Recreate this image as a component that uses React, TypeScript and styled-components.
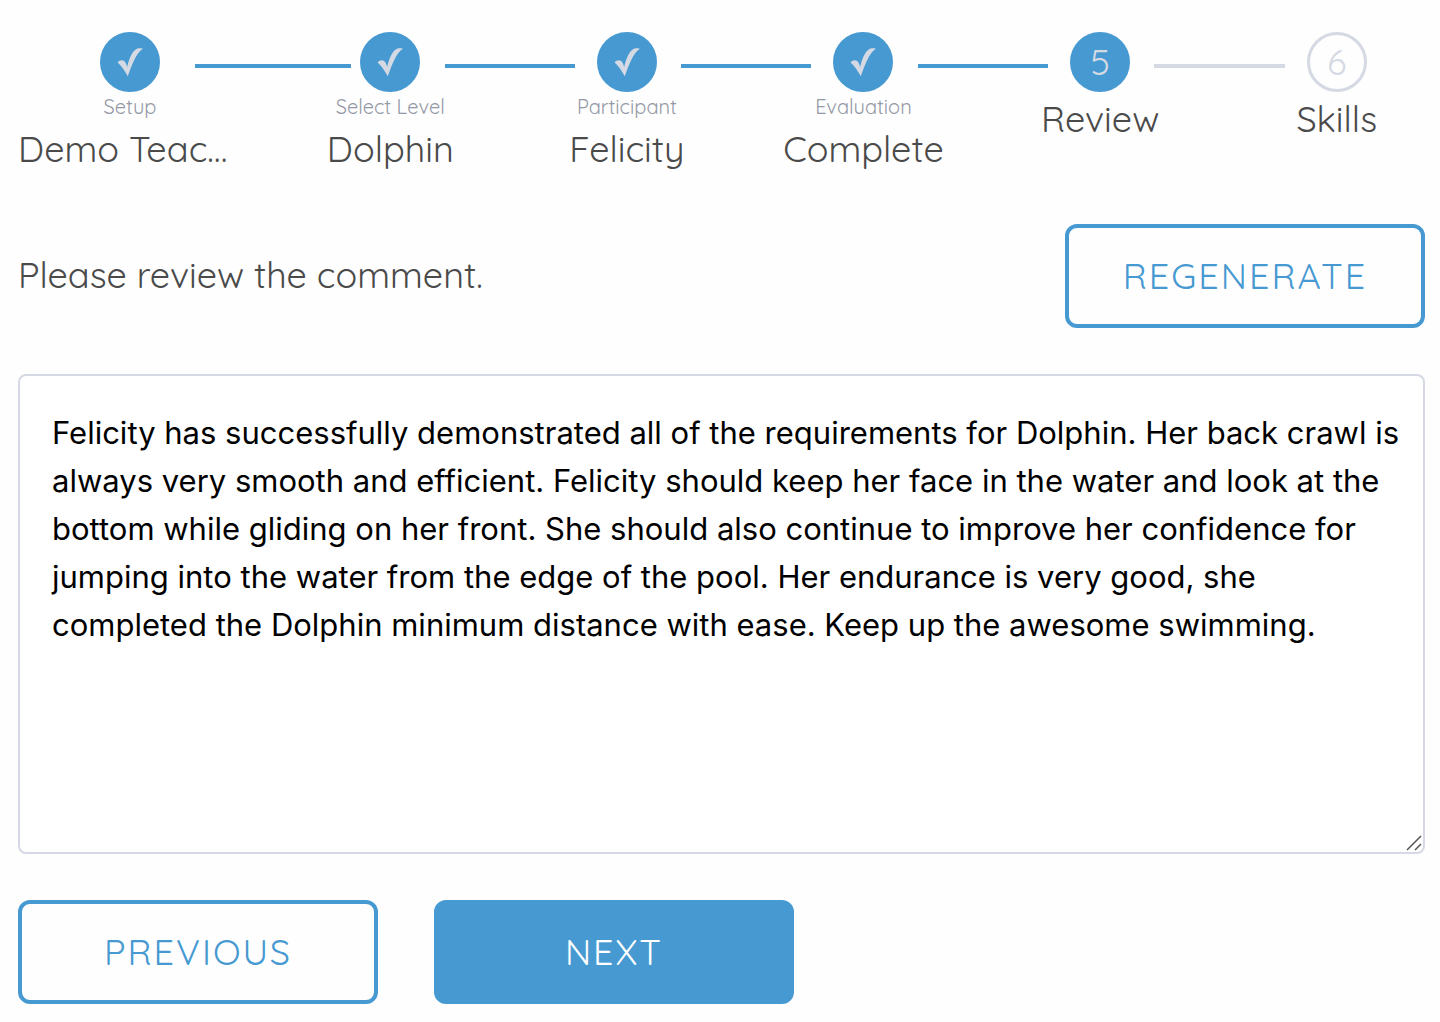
import React, { useState } from "react";
import styled, { createGlobalStyle } from "styled-components";

const blue = "#4699d1";
const mist = "#d5d9e3";
const slate = "#9499a6";
const ink = "#4a4a4a";

const GlobalStyle = createGlobalStyle`
  *, *::before, *::after { box-sizing: border-box; }
  body {
    margin: 0;
    background: #fefefe;
    color: ${ink};
    font-family: Quicksand, Lato, sans-serif;
    font-size: 36px;
  }
`;

const Page = styled.main`
  padding: 32px 15px 18px 18px;
`;

const Steps = styled.ol`
  display: grid;
  grid-template-columns: 224px repeat(5, minmax(0, 1fr));
  margin: 0 0 48px;
  padding: 0;
  list-style: none;
`;

const Step = styled.li<{ $first: boolean }>`
  display: grid;
  grid-template-columns: ${(p) => (p.$first ? "0" : "60px")} minmax(0, 1fr);
  grid-template-rows: 60px;
  align-content: start;
`;

const Connector = styled.span<{ $active: boolean; $long: boolean }>`
  grid-area: 1 / 1 / 2 / 3;
  align-self: center;
  width: ${(p) => (p.$long ? "66%" : "55%")};
  height: 4px;
  margin-top: 8px;
  margin-left: ${(p) => (p.$long ? "-47px" : "-34px")};
  background: ${(p) => (p.$active ? blue : mist)};
`;

const Marker = styled.span<{ $active: boolean }>`
  grid-area: 1 / 2;
  justify-self: center;
  display: flex;
  align-items: center;
  justify-content: center;
  width: 60px;
  height: 60px;
  padding-bottom: 2px;
  border: 3px solid ${(p) => (p.$active ? blue : mist)};
  border-radius: 50%;
  background: ${(p) => (p.$active ? blue : "transparent")};
  color: ${mist};
`;

const Caption = styled.span`
  grid-column: 2;
  color: ${slate};
  font-size: 20px;
  line-height: 30px;
  text-align: center;
`;

const Title = styled.span`
  grid-column: 2;
  overflow: hidden;
  line-height: 54px;
  text-align: center;
  text-overflow: ellipsis;
  white-space: nowrap;
`;

const Toolbar = styled.div`
  display: flex;
  align-items: center;
  justify-content: space-between;
  margin-bottom: 46px;
`;

const Prompt = styled.label`
  padding-bottom: 2px;
  line-height: 54px;
`;

const Button = styled.button<{ $primary?: boolean }>`
  width: 360px;
  height: 104px;
  padding: 0 0 2px;
  border: 4px solid ${blue};
  border-radius: 12px;
  background: ${(p) => (p.$primary ? blue : "transparent")};
  color: ${(p) => (p.$primary ? "#fff" : blue)};
  font: inherit;
  letter-spacing: 2px;
  text-transform: uppercase;
  cursor: pointer;
`;

const Editor = styled.div`
  position: relative;
  margin-bottom: 46px;
`;

const Comment = styled.textarea`
  display: block;
  width: 100%;
  height: 480px;
  padding: 33px 20px 32px 32px;
  border: 2px solid ${mist};
  border-radius: 8px;
  outline: none;
  background: #fff;
  color: #000;
  font-family: Inter, sans-serif;
  font-size: 31px;
  line-height: 48px;
  resize: vertical;

  &::-webkit-resizer { display: none; }
`;

const Grip = styled.svg`
  position: absolute;
  right: 3px;
  bottom: 3px;
  pointer-events: none;
`;

const Actions = styled.div`
  display: flex;
  gap: 56px;
`;

const TickIcon = styled.svg`
  flex: none;
`;

const Tick = () => (
  <TickIcon width="60" height="60" viewBox="0 -1 60 60" fill="currentColor" aria-hidden="true">
    <path d="M17.6 30.4C19.2 28.4 22 27.6 23.8 28.8C25.4 30 26.4 32.4 27.2 35C28.6 28.6 31.4 20.6 35.4 17.8C37.6 16.2 40 16 42.8 16.8C36 21.6 32.2 32 27.8 44.2C25.2 39.4 21.8 34 17.6 30.4Z" />
  </TickIcon>
);

type StepData = { title: string; caption?: string; state: "done" | "current" | "todo" };

const steps: StepData[] = [
  { caption: "Setup", title: "Demo Teacher", state: "done" },
  { caption: "Select Level", title: "Dolphin", state: "done" },
  { caption: "Participant", title: "Felicity", state: "done" },
  { caption: "Evaluation", title: "Complete", state: "done" },
  { title: "Review", state: "current" },
  { title: "Skills", state: "todo" },
];

const initialComment =
  "Felicity has successfully demonstrated all of the requirements for Dolphin. Her back crawl is always very smooth and efficient. Felicity should keep her face in the water and look at the bottom while gliding on her front. She should also continue to improve her confidence for jumping into the water from the edge of the pool. Her endurance is very good, she completed the Dolphin minimum distance with ease. Keep up the awesome swimming.";

export default function App() {
  const [comment, setComment] = useState(initialComment);

  return (
    <Page>
      <GlobalStyle />
      <Steps>
        {steps.map((step, i) => {
          const active = step.state !== "todo";
          return (
            <Step key={step.title} $first={i === 0} aria-current={step.state === "current" ? "step" : undefined}>
              {i > 0 && <Connector $active={active} $long={i === 1} />}
              <Marker $active={active}>{step.state === "done" ? <Tick /> : i + 1}</Marker>
              {step.caption && <Caption>{step.caption}</Caption>}
              <Title>{step.title}</Title>
            </Step>
          );
        })}
      </Steps>
      <Toolbar>
        <Prompt htmlFor="comment">Please review the comment.</Prompt>
        <Button type="button">Regenerate</Button>
      </Toolbar>
      <Editor>
        <Comment id="comment" spellCheck={false} value={comment} onChange={(e) => setComment(e.target.value)} />
        <Grip width="16" height="16" viewBox="0 0 16 16" stroke="#555" strokeWidth="1.5" aria-hidden="true">
          <path d="M1 15L15 1M9 15L15 9" />
        </Grip>
      </Editor>
      <Actions>
        <Button type="button">Previous</Button>
        <Button type="button" $primary>Next</Button>
      </Actions>
    </Page>
  );
}
